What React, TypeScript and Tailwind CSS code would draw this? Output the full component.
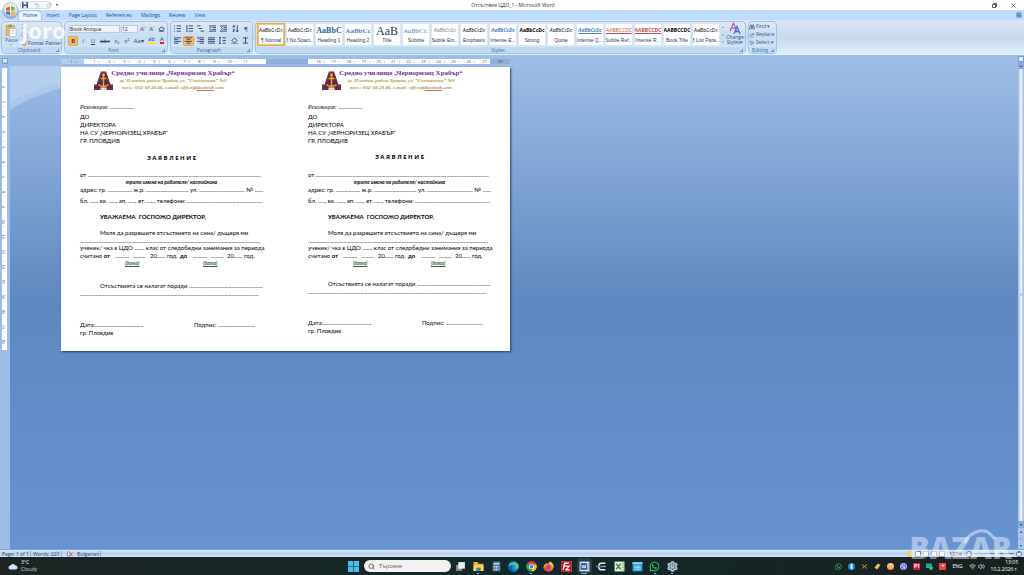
import type { ReactNode } from "react";
import { FaWhatsapp, FaViber, FaBluetoothB } from "react-icons/fa";
import { SiFilezilla } from "react-icons/si";
import {
  Binoculars,
  CircleHelp,
  Copy,
  MousePointer2,
  Paintbrush,
  Redo2,
  Scissors,
  Search,
  Settings,
  Undo2,
  Volume2,
  Wifi,
} from "lucide-react";

const tabs = ["Home", "Insert", "Page Layout", "References", "Mailings", "Review", "View"];

const styleItems = [
  { sample: "AaBbCcDc", label: "¶ Normal", look: "text-black text-[5px]" },
  { sample: "AaBbCcDc", label: "¶ No Spaci...", look: "text-black text-[5px]" },
  { sample: "AaBbC", label: "Heading 1", look: "text-[#2a6092] text-[8px] font-bold font-['Liberation_Serif',serif]" },
  { sample: "AaBbCc", label: "Heading 2", look: "text-[#4f81bd] text-[7px] font-bold font-['Liberation_Serif',serif]" },
  { sample: "AaB", label: "Title", look: "text-[#17365d] text-[12px] font-['Liberation_Serif',serif]" },
  { sample: "AaBbCc.", label: "Subtitle", look: "text-[#4f81bd] text-[7px] italic font-['Liberation_Serif',serif]" },
  { sample: "AaBbCcDc", label: "Subtle Em...", look: "text-[#808080] text-[5px] italic" },
  { sample: "AaBbCcDc", label: "Emphasis", look: "text-black text-[5px] italic" },
  { sample: "AaBbCcDc", label: "Intense E...", look: "text-[#4f81bd] text-[5px] italic font-bold" },
  { sample: "AaBbCcDc", label: "Strong", look: "text-black text-[5px] font-bold" },
  { sample: "AaBbCcDc", label: "Quote", look: "text-black text-[5px] italic" },
  { sample: "AaBbCcDc", label: "Intense Q...", look: "text-[#4f81bd] text-[5px] italic font-bold underline" },
  { sample: "AABBCCDC", label: "Subtle Ref...", look: "text-[#c0504d] text-[5px] underline" },
  { sample: "AABBCCDC", label: "Intense R...", look: "text-[#c0504d] text-[5px] font-bold underline" },
  { sample: "AABBCCDC", label: "Book Title", look: "text-black text-[5px] font-bold" },
  { sample: "AaBbCcDc", label: "¶ List Para...", look: "text-black text-[5px]" },
];

const dots = (n: number) => ".".repeat(n);
const range = (from: number, to: number) =>
  Array.from({ length: to - from + 1 }, (_, i) => from + i);

function Group({ title, className, children }: { title: string; className: string; children: ReactNode }) {
  return (
    <section
      aria-label={title}
      className={`flex flex-col overflow-hidden rounded-sm border border-[#a5c3e8] bg-gradient-to-b from-[#dce8f5] via-[#c9dcf0] to-[#d6e8fa] ${className}`}
    >
      <div className="flex min-h-0 flex-1">{children}</div>
      <div className="flex h-1.5 items-center justify-center bg-[#c1d9f1] text-[5px] leading-[6px] text-[#3e6aaa]">
        <span className="flex-1 text-center">{title}</span>
        <span className="mr-0.5 size-[3px] border-b border-r border-[#6d8fc0]" />
      </div>
    </section>
  );
}

function Tool({ label, active, children }: { label: string; active?: boolean; children: ReactNode }) {
  return (
    <button
      aria-label={label}
      className={`flex h-2 min-w-2 items-center justify-center whitespace-nowrap px-px text-[6px] leading-[8px] text-[#2b4677] ${
        active ? "rounded-[1px] bg-[#fbb95f] ring-1 ring-[#e0a457]" : ""
      }`}
    >
      {children}
    </button>
  );
}

function Lines({ d }: { d: string }) {
  return (
    <svg viewBox="0 0 8 8" className="size-[7px]" fill="none" stroke="#26406f" strokeWidth="1">
      <path d={d} />
    </svg>
  );
}

function OfficeButton() {
  return (
    <button aria-label="Office Button" className="absolute left-0.5 top-0.5 size-[17px]">
      <svg viewBox="0 0 34 34">
        <defs>
          <radialGradient id="orb" cx="0.5" cy="0.3" r="0.7">
            <stop offset="0" stopColor="#ffffff" />
            <stop offset="0.6" stopColor="#d5dce8" />
            <stop offset="1" stopColor="#8c9fbd" />
          </radialGradient>
        </defs>
        <circle cx="17" cy="17" r="16" fill="url(#orb)" stroke="#8da2c4" />
        <path d="M8 12l8-3v8H8z" fill="#e8592a" />
        <path d="M18 8l7 3v6h-7z" fill="#7fb342" />
        <path d="M8 19h8v7l-8-2z" fill="#3b7fc8" />
        <path d="M18 19h8v5l-8 3z" fill="#f6b72d" />
      </svg>
    </button>
  );
}

function TitleBar() {
  return (
    <header className="flex h-2.5 items-center bg-white pl-5 text-[#333]">
      <div className="flex h-2 w-8 items-center gap-1.5 rounded-r-full border border-[#d5dded] bg-[#f3f6fb] pl-px">
        <button aria-label="Save">
          <svg viewBox="0 0 12 12" className="size-1.5">
            <path d="M0 0h12v12H0z" fill="#3d4fa8" />
            <path d="M3 0h6v5H3zM3 8h6v4H3z" fill="#e8edf8" />
          </svg>
        </button>
        <button aria-label="Undo"><Undo2 className="size-1.5 text-[#8fa6cc]" /></button>
        <button aria-label="Redo"><Redo2 className="size-1.5 text-[#8fa6cc]" /></button>
      </div>
      <span className="ml-1 text-[4px] leading-[6px]">▾</span>
      <h1 className="flex-1 pr-6 text-center text-[5px] leading-[6px]">Отсъствие ЦДО_1 - Microsoft Word</h1>
      <div className="flex w-8 items-center justify-between pr-2">
        <button aria-label="Restore">
          <svg viewBox="0 0 10 10" className="size-[5px]" fill="none" stroke="#333" strokeWidth="1.6">
            <path d="M1 3h6v6H1zM3 3V1h6v6H7" />
          </svg>
        </button>
        <button aria-label="Close">
          <svg viewBox="0 0 10 10" className="size-[5px]" stroke="#333" strokeWidth="1.4">
            <path d="M1 1l8 8M9 1L1 9" />
          </svg>
        </button>
      </div>
    </header>
  );
}

function Tabs() {
  return (
    <nav className="flex h-2.5 items-end gap-px bg-[#bfdbff] pl-[19px] pr-0.5">
      {tabs.map((tab) => (
        <button
          key={tab}
          className={`h-[9px] whitespace-nowrap px-1 text-[5px] leading-[9px] text-[#234a8e] ${
            tab === "Home" ? "rounded-t-sm bg-[#eaf3ff] ring-1 ring-[#a2c2ee]" : ""
          }`}
        >
          {tab}
        </button>
      ))}
      <button aria-label="Help" className="mb-0.5 ml-auto">
        <CircleHelp className="size-1.5 rounded-full bg-[#3d74c6] text-white" />
      </button>
    </nav>
  );
}

function Ribbon() {
  return (
    <div className="relative flex h-9 gap-0.5 border-b border-[#9cbfe8] bg-gradient-to-b from-[#dbe6f3] via-[#c7daed] to-[#dff1fd] px-px py-px">
      <Group title="Clipboard" className="w-[61px]">
        <button className="flex w-5 flex-col items-center pt-0.5 text-[5px] leading-[6px] text-[#3e5f96]">
          <svg viewBox="0 0 24 26" className="h-[13px] w-3">
            <path d="M2 3h17v20H2z" fill="#e9b650" stroke="#b88a35" />
            <path d="M7 1h7v5H7z" fill="#8a8fa0" />
            <path d="M9 9h13v16H9z" fill="#fff" stroke="#8aa0c6" />
            <path d="M11 13h8M11 16h8M11 19h8" stroke="#9cb2d6" />
          </svg>
          Paste
          <span className="text-[3px] leading-[4px]">▾</span>
        </button>
        <div className="flex flex-col items-start justify-between pt-px text-[5px] leading-[7px] text-[#33528c]">
          <button aria-label="Cut"><Scissors className="size-[7px] text-[#8fa5c8]" /></button>
          <button aria-label="Copy"><Copy className="size-[7px] text-[#8fa5c8]" /></button>
          <button className="flex items-center whitespace-nowrap font-['Liberation_Sans',sans-serif]">
            <Paintbrush className="size-[7px] text-[#c29335]" />
            Format Painter
          </button>
        </div>
      </Group>

      <Group title="Font" className="w-[104px]">
        <div className="flex flex-1 flex-col justify-center gap-1 px-1">
          <div className="flex items-center gap-px">
            <select aria-label="Font name" className="h-2 w-[51px] appearance-none border border-[#b7cbe8] bg-[#eef5fd] text-[5px] leading-[6px] text-[#222]">
              <option>Book Antiqua</option>
            </select>
            <select aria-label="Font size" className="h-2 w-[17px] appearance-none border border-[#b7cbe8] bg-[#eef5fd] text-[5px] leading-[6px] text-[#222]">
              <option>12</option>
            </select>
            <Tool label="Grow Font">A˄</Tool>
            <Tool label="Shrink Font">A˅</Tool>
            <Tool label="Clear Formatting"><Lines d="M1 5l3-3 3 2-3 3zM1 7h6" /></Tool>
          </div>
          <div className="flex items-center justify-between">
            <Tool label="Bold" active><b>B</b></Tool>
            <Tool label="Italic"><i>I</i></Tool>
            <Tool label="Underline"><u>U</u></Tool>
            <Tool label="Strikethrough"><s>abc</s></Tool>
            <Tool label="Subscript">x₂</Tool>
            <Tool label="Superscript">x²</Tool>
            <Tool label="Change Case">Aa▾</Tool>
            <Tool label="Highlight">
              <span className="border-b-2 border-[#ffee00] leading-[5px]">ab</span>
            </Tool>
            <Tool label="Font Color">
              <span className="border-b-2 border-[#e02020] leading-[5px]">A</span>
            </Tool>
          </div>
        </div>
      </Group>

      <Group title="Paragraph" className="w-[83px]">
        <div className="flex flex-1 flex-col justify-center gap-1 px-0.5">
          <div className="flex items-center justify-between">
            <Tool label="Bullets"><Lines d="M0 1h1M3 1h5M0 4h1M3 4h5M0 7h1M3 7h5" /></Tool>
            <Tool label="Numbering"><Lines d="M1 0v8M3 1h5M3 4h5M3 7h5" /></Tool>
            <Tool label="Multilevel List"><Lines d="M0 1h4M2 4h4M4 7h4" /></Tool>
            <Tool label="Decrease Indent"><Lines d="M0 1h8M4 3h4M4 5h4M0 7h8M3 2L1 4l2 2" /></Tool>
            <Tool label="Increase Indent"><Lines d="M0 1h8M4 3h4M4 5h4M0 7h8M1 2l2 2-2 2" /></Tool>
            <Tool label="Sort"><Lines d="M1 3l1-3 1 3M1 5h2L1 8h2M6 0v8M5 6l1 2 1-2" /></Tool>
            <Tool label="Show Marks">¶</Tool>
          </div>
          <div className="flex items-center justify-between">
            <Tool label="Align Left"><Lines d="M0 1h8M0 3h5M0 5h8M0 7h5" /></Tool>
            <Tool label="Center" active><Lines d="M0 1h8M2 3h4M0 5h8M2 7h4" /></Tool>
            <Tool label="Align Right"><Lines d="M0 1h8M3 3h5M0 5h8M3 7h5" /></Tool>
            <Tool label="Justify"><Lines d="M0 1h8M0 3h8M0 5h8M0 7h8" /></Tool>
            <Tool label="Line Spacing"><Lines d="M1 0v8M0 1l1-1 1 1M0 7l1 1 1-1M4 1h4M4 4h4M4 7h4" /></Tool>
            <Tool label="Shading"><Lines d="M1 4l3-3 3 3-3 3zM0 8h8" /></Tool>
            <Tool label="Borders"><Lines d="M1 1h6M4 1v6M1 7h6" /></Tool>
          </div>
        </div>
      </Group>

      <Group title="Styles" className="w-[491px]">
        <div className="flex pt-px pl-px">
          {styleItems.map((item, i) => (
            <button
              key={item.label}
              className={`mr-px flex h-[23px] w-7 flex-col items-center justify-between overflow-hidden whitespace-nowrap border bg-white pb-px pt-px text-[#2a3a6b] ${
                i === 0 ? "border-[#eaa944] ring-1 ring-inset ring-[#f3c67a]" : "border-[#dbe7f5]"
              }`}
            >
              <span className={`flex h-3 items-center ${item.look}`}>{item.sample}</span>
              <span className="font-['Liberation_Sans',sans-serif] text-[5px] leading-[7px]">{item.label}</span>
            </button>
          ))}
        </div>
        <div className="flex w-1 flex-col justify-evenly text-[3px] leading-[4px] text-[#4a6699]">
          <button aria-label="Scroll up">▴</button>
          <button aria-label="Scroll down">▾</button>
          <button aria-label="More styles">▾</button>
        </div>
        <button className="flex w-5 flex-col items-center text-[5px] leading-[5px] text-[#33528c]">
          <svg viewBox="0 0 24 26" className="h-[13px] w-3" fill="none" strokeWidth="2.5">
            <path d="M2 18L9 2l6 16M5 12h8" stroke="#b45bc0" />
            <path d="M10 24l6-15 6 15M12 19h8" stroke="#3e74c8" />
          </svg>
          <span>Change</span>
          <span>Styles▾</span>
        </button>
      </Group>

      <Group title="Editing" className="w-[29px]">
        <div className="flex flex-col justify-evenly text-[5px] leading-[7px] text-[#33528c]">
          <button className="flex items-center gap-px"><Binoculars className="size-1.5" />Find ▾</button>
          <button className="flex items-center gap-px"><Redo2 className="size-1.5" />Replace</button>
          <button className="flex items-center gap-px"><MousePointer2 className="size-1.5" />Select ▾</button>
        </div>
      </Group>

      <span className="pointer-events-none absolute left-[21px] top-0 text-[22px] font-bold leading-[20px] text-white/80">
        Joro
      </span>
    </div>
  );
}

function RulerScale({ from, to }: { from: number; to: number }) {
  return (
    <div className="flex h-[5px] w-[182px] overflow-hidden bg-white pl-1">
      {range(from, to).map((n) => (
        <span key={n} className="w-[15px] shrink-0 whitespace-nowrap text-center text-[4px] leading-[5px]">
          · {n} ·{n < to && " ı"}
        </span>
      ))}
    </div>
  );
}

function HorizontalRuler() {
  return (
    <div className="flex h-2.5 items-center text-[#3a4a68]">
      <div className="w-[61px] pl-0.5">
        <button aria-label="Tab selector" className="block size-1.5 border border-[#7c9ac6] bg-[#e3edfa] text-[5px] leading-[4px]">
          ∟
        </button>
      </div>
      <span className="h-[5px] w-[23px] bg-[#b5cdef] text-center text-[4px] leading-[5px]">· 1 · ı</span>
      <RulerScale from={1} to={11} />
      <span className="h-[5px] w-[42px] bg-[#8fafd9]" />
      <RulerScale from={16} to={27} />
      <span className="h-[5px] w-5 bg-[#8fafd9] text-center text-[4px] leading-[5px]">· 28 ·</span>
    </div>
  );
}

function VerticalRuler() {
  return (
    <div className="w-2.5 bg-[#9dbde6] pl-0.5 pt-0.5">
      <div className="flex w-[5px] flex-col items-center bg-white py-1.5 text-[#3a4a68]">
        {range(1, 18).map((n) => (
          <span key={n} className="flex h-[15px] flex-col items-center justify-between text-[4px] leading-[4px]">
            <span>-</span>
            <span>·</span>
            <span className="-rotate-90">{n}</span>
          </span>
        ))}
      </div>
    </div>
  );
}

function SchoolCrest() {
  return (
    <svg viewBox="0 0 38 40" className="mt-0.5 h-5 w-[19px] shrink-0">
      <path d="M14 1h10l9 26h5v11H25v-5H13v5H0V27h5z" fill="#5b2547" />
      <path d="M15 3h8l9 26h4v7H2v-7h4z" fill="none" stroke="#a04a4c" strokeWidth="1.500" strokeDasharray="3 2" />
      <path d="M19 5v27M13 15h12M9 27c4 5 16 5 20 0" fill="none" stroke="#e8a531" strokeWidth="3" />
      <circle cx="19" cy="8" r="3" fill="#e8a531" />
    </svg>
  );
}

interface ApplicationProps {
  titleGap: string;
  reasonGap: string;
  signGap: string;
}

function Application({ titleGap, reasonGap, signGap }: ApplicationProps) {
  return (
    <article className="w-[183px] whitespace-nowrap pt-0.5 font-['Lato','Liberation_Sans',sans-serif] text-[6px] leading-[8px] text-black">
      <div className="flex pl-3.5">
        <SchoolCrest />
        <div className="-ml-1 w-32 text-center font-['Liberation_Serif',serif]">
          <h2 className="text-[7px] font-bold text-[#7030a0]">Средно училище „Черноризец Храбър“</h2>
          <p className="text-[5px] font-bold italic leading-[7px] text-[#b5943c]">гр. Пловдив, район Тракия, ул. “Съединение” №9</p>
          <p className="text-[5px] font-bold italic leading-[7px] text-[#b5943c]">
            тел.: 032/ 68 28 48, e-mail: office@<span className="underline decoration-[#d66]">duohrab</span>.com
          </p>
        </div>
      </div>
      <p className="mt-3 font-['Liberation_Serif',serif] italic">Резолюция: {dots(16)}</p>
      <div className="mt-0.5">
        <p>ДО</p>
        <p>ДИРЕКТОРА</p>
        <p>НА СУ „ЧЕРНОРИЗЕЦ ХРАБЪР“</p>
        <p>ГР. ПЛОВДИВ</p>
      </div>
      <h3 className={`text-center font-['Open_Sans',sans-serif] font-bold ${titleGap}`}>З А Я В Л Е Н И Е</h3>
      <p>от {dots(122)}</p>
      <p className="text-center text-[5px] font-bold italic leading-[7px]">трите имена на родителя/ настойника</p>
      <p className="leading-[7px]">адрес: гр. {dots(17)} ж.р. {dots(30)} ул. {dots(32)} № ......</p>
      <p className="mt-1">бл. ....., вх. ....., ап. ....., ет. ....., телефони: {dots(53)}</p>
      <p className="mt-2 pl-5 font-bold">УВАЖАЕМА&nbsp; ГОСПОЖО ДИРЕКТОР,</p>
      <p className="mt-2 pl-5">Моля да разрешите отсъствието на сина/ дъщеря ми</p>
      <p className="leading-[7px]">{dots(126)},</p>
      <p>ученик/ чка в ЦДО ....... клас от следобедни занимания за периода</p>
      <p className="flex">
        <span className="w-[35px]">считано <b>от</b></span>
        <span className="w-[18px]">..........</span>
        <span className="w-[17px]">.........</span>
        <span className="w-[30px]">20...... год.</span>
        <b className="w-[13px]">до</b>
        <span className="w-[18px]">..........</span>
        <span className="w-4">.........</span>
        <span>20...... год.</span>
      </p>
      <p className="flex text-[5px] font-bold italic leading-[7px] text-[#3d5c3d]">
        <span className="w-[78px] pl-[45px] underline">(дата)</span>
        <span className="pl-[45px] underline">(дата)</span>
      </p>
      <p className={`pl-5 ${reasonGap}`}>Отсъствията се налагат поради {dots(52)}</p>
      <p>{dots(126)}</p>
      <div className={`flex ${signGap}`}>
        <span className="w-[114px]">Дата:{dots(34)}</span>
        <span>Подпис: {dots(26)}</span>
      </div>
      <p>гр. Пловдив</p>
    </article>
  );
}

function ScrollBar() {
  return (
    <div className="flex w-1.5 flex-col items-center bg-[#a9c4e8] text-[4px] leading-[7px] text-[#29406c]">
      <button aria-label="View ruler" className="size-1.5 border border-[#7c9ac6] bg-[#e3edfa]" />
      <button aria-label="Scroll up" className="h-[7px] w-full bg-[#8aa9d6]">▴</button>
      <div className="flex w-1 flex-1 flex-col justify-center border-x border-[#c3d3ea] bg-[#e6eef9] text-center">
        <span className="leading-[4px]">≡</span>
      </div>
      <button aria-label="Scroll down" className="h-[7px] w-full bg-[#8aa9d6]">▾</button>
      <button aria-label="Previous page">▴</button>
      <button aria-label="Browse object">○</button>
      <button aria-label="Next page">▾</button>
    </div>
  );
}

function StatusBar() {
  return (
    <footer className="flex h-2 items-center border-t border-[#7fa3d6] bg-gradient-to-b from-[#dbe9fb] via-[#b5d0f3] to-[#d6e6fa] text-[5px] leading-[6px] text-[#26406f]">
      <span className="w-[31px] whitespace-nowrap border-r border-[#8fb0de] pl-0.5">Page: 1 of 1</span>
      <span className="w-[31px] whitespace-nowrap border-r border-[#8fb0de] pl-0.5">Words: 220</span>
      <span className="flex w-[15px] justify-center">
        <svg viewBox="0 0 12 12" className="size-1.5" fill="none" strokeWidth="2">
          <path d="M1 2h5v8H1z" stroke="#7b8fb5" fill="#fff" />
          <path d="M5 4l6 6M11 3L5 10" stroke="#e05a2e" />
        </svg>
      </span>
      <span className="w-6 border-r border-[#8fb0de]">Bulgarian</span>
      <div className="ml-auto flex items-center gap-0.5 pr-0.5">
        <button aria-label="Print Layout" className="size-1.5 bg-[#fbc877]" />
        <button aria-label="Full Screen Reading" className="size-1.5 border border-[#6681ae] bg-white" />
        <button aria-label="Web Layout" className="size-1.5 border border-[#8fa9d3] bg-white" />
        <button aria-label="Outline" className="size-1.5 border border-[#8fa9d3] bg-white" />
        <button aria-label="Draft" className="size-1.5 border border-[#8fa9d3] bg-white" />
        <span className="px-0.5">127%</span>
        <button aria-label="Zoom out" className="size-1.5 rounded-full border border-[#5c78a8] bg-white leading-[3px]">-</button>
        <input
          aria-label="Zoom"
          type="range"
          defaultValue={56}
          className="h-px w-10 appearance-none bg-[#6681ae] [&::-webkit-slider-thumb]:h-[5px] [&::-webkit-slider-thumb]:w-[3px] [&::-webkit-slider-thumb]:appearance-none [&::-webkit-slider-thumb]:bg-[#e9f1fc]"
        />
        <button aria-label="Zoom in" className="size-1.5 rounded-full border border-[#5c78a8] bg-white leading-[3px]">+</button>
      </div>
    </footer>
  );
}

function AppButton({ label, running, active, children }: { label: string; running?: boolean; active?: boolean; children: ReactNode }) {
  return (
    <button
      aria-label={label}
      className={`flex h-4 w-[15px] flex-col items-center justify-end gap-px rounded-sm ${active ? "bg-white/10" : ""}`}
    >
      {children}
      <span className={`h-px ${active ? "w-1.5 bg-[#5cc4f2]" : running ? "w-0.5 bg-[#a9b3b5]" : "w-0.5"}`} />
    </button>
  );
}

function TaskBar() {
  return (
    <div className="flex h-[18px] items-center bg-gradient-to-r from-[#1d2423] via-[#12292b] to-[#18211f] text-white">
      <div className="flex flex-1 items-center gap-[3px] pl-2 text-[5px] leading-[7px]">
        <svg viewBox="0 0 20 14" className="h-[7px] w-2.5">
          <path d="M5 13a4 4 0 010-8 5.500 5.500 0 0110 0 4 4 0 010 8z" fill="#cfe3fb" />
        </svg>
        <div>
          <p>3°C</p>
          <p className="text-[#d0d6d6]">Cloudy</p>
        </div>
      </div>

      <div className="flex w-[334px] items-center justify-between">
        <AppButton label="Start">
          <svg viewBox="0 0 20 20" className="size-[11px]">
            <path d="M0 0h9.500v9.500H0zM10.500 0H20v9.500h-9.500zM0 10.500h9.500V20H0zM10.500 10.500H20V20h-9.500z" fill="#47bdf0" />
          </svg>
        </AppButton>
        <label className="flex h-3 w-[87px] items-center gap-1 rounded-full bg-[#f1f3f3] px-1">
          <Search className="size-[7px] text-[#222]" />
          <input
            aria-label="Search"
            placeholder="Търсене"
            className="w-14 bg-transparent font-['Liberation_Sans',sans-serif] text-[6px] leading-[8px] outline-none placeholder:text-[#666]"
          />
        </label>
        <AppButton label="Task View">
          <svg viewBox="0 0 20 20" className="size-[11px]">
            <path d="M2 7h11v11H2z" fill="#8b9193" />
            <path d="M6 2h12v12H6z" fill="#eceeee" />
          </svg>
        </AppButton>
        <AppButton label="File Explorer" running>
          <svg viewBox="0 0 20 20" className="size-[11px]">
            <path d="M1 2h7l2 3h9v13H1z" fill="#f3b62f" />
            <path d="M1 8h18v10H1z" fill="#ffd65c" />
            <path d="M6 12h8v6H6z" fill="#2a82d2" />
          </svg>
        </AppButton>
        <AppButton label="Calculator">
          <svg viewBox="0 0 20 20" className="size-[11px]">
            <path d="M3 1h14v18H3z" fill="#566a77" />
            <path d="M5 3h10v4H5z" fill="#8fd3f7" />
            <path d="M5 9h3v3H5zM9 9h3v3H9zM5 14h3v3H5zM9 14h3v3H9z" fill="#dfe6ea" />
            <path d="M13 9h3v8h-3z" fill="#41a5e4" />
          </svg>
        </AppButton>
        <AppButton label="Edge">
          <svg viewBox="0 0 20 20" className="size-[11px]">
            <circle cx="10" cy="10" r="9.500" fill="#1d87d2" />
            <path d="M1 9a9.500 9.500 0 0118.500 1c0 4-5 5-7 3 2-3-1-6-4-6-3 0-6 1-7.500 2z" fill="#46cf8a" />
            <path d="M8 9c-3 4 0 9 6 9-7 3-12-1-12-6 1-3 4-4 6-3z" fill="#125ba6" />
          </svg>
        </AppButton>
        <AppButton label="Chrome" running>
          <svg viewBox="0 0 20 20" className="size-[11px]">
            <path d="M10 10L1.800 5A9.500 9.500 0 0118.200 5z" fill="#e84335" />
            <path d="M10 10L18.200 5A9.500 9.500 0 0110 19.500z" fill="#fbc116" />
            <path d="M10 10v9.500A9.500 9.500 0 011.800 5z" fill="#33a852" />
            <circle cx="10" cy="10" r="4.600" fill="#fff" />
            <circle cx="10" cy="10" r="3.500" fill="#4285f4" />
          </svg>
        </AppButton>
        <AppButton label="Firefox">
          <svg viewBox="0 0 20 20" className="size-[11px]">
            <path d="M3 5l2 1 1-3 3 2 3-4c5 2 8 6 7 11-1 5-5 7-9 7S1 16 1 11c0-2 1-4 2-6z" fill="#ff8a2b" />
            <path d="M12 1c5 2 8 6 7 11-1-3-3-5-6-6z" fill="#ffd23c" />
            <circle cx="10" cy="11" r="4" fill="#8a4bd0" />
            <path d="M1 11c0 5 5 8 9 8s7-2 8-5c-4 3-10 3-12-2-2 0-4-1-5-1z" fill="#f0443e" />
          </svg>
        </AppButton>
        <AppButton label="FileZilla"><SiFilezilla className="size-[11px] bg-white text-[#c01818]" /></AppButton>
        <AppButton label="Word" active>
          <svg viewBox="0 0 20 20" className="size-[11px]">
            <path d="M1 1h18v18H1z" fill="#cfdcf3" />
            <path d="M3 4h12v12H3z" fill="#2b57a4" />
            <path d="M5 7l2 6 2-5 2 5 2-6" fill="none" stroke="#fff" strokeWidth="1.500" />
            <path d="M16 5h2M16 9h2M16 13h2" stroke="#2b57a4" />
          </svg>
        </AppButton>
        <AppButton label="Editor">
          <svg viewBox="0 0 20 20" className="size-[11px]" fill="none" strokeWidth="2.500">
            <path d="M17 4H9c-3 0-4 2-4 6s1 6 4 6h8" stroke="#e9ecec" />
            <path d="M0 10h9" stroke="#b15bd8" />
            <path d="M9 10h9" stroke="#4fb6e8" />
          </svg>
        </AppButton>
        <AppButton label="Excel">
          <svg viewBox="0 0 20 20" className="size-[11px]">
            <path d="M1 1h18v18H1z" fill="#e0efd7" />
            <path d="M4 5l8 10M12 5L4 15" stroke="#3b8a3c" strokeWidth="2.500" />
            <path d="M14 4h4M14 8h4M14 12h4M14 16h4" stroke="#6cae5b" strokeWidth="1.500" />
          </svg>
        </AppButton>
        <AppButton label="Calendar">
          <svg viewBox="0 0 20 20" className="size-[11px]">
            <path d="M1 2h18v17H1z" fill="#1f9bdd" />
            <path d="M1 2h18v4H1z" fill="#7cd0f5" />
            <path d="M5 9h10v7H5zM5 12h10M9 9v7M12 9v7" fill="none" stroke="#d9f2ff" />
          </svg>
        </AppButton>
        <AppButton label="WhatsApp" running><FaWhatsapp className="size-[11px] text-[#35d366]" /></AppButton>
        <AppButton label="Settings" running><Settings strokeWidth={4} className="size-[11px] text-[#a9c4dc]" /></AppButton>
      </div>

      <div className="flex flex-1 items-center justify-end gap-1.5 pr-1.5">
        <FaWhatsapp className="size-[7px] text-[#35d366]" />
        <FaBluetoothB className="size-[7px] rounded-full bg-[#1787dc]" />
        <svg viewBox="0 0 14 14" className="size-[7px]" stroke="#c3a32a" strokeWidth="2">
          <path d="M2 3l10 8M12 3L2 11" />
        </svg>
        <svg viewBox="0 0 14 14" className="size-[7px]">
          <path d="M1 9l7-8 5 3-7 9z" fill="#f0c35a" />
        </svg>
        <span className="size-[7px] rounded-full bg-gradient-to-b from-[#ffd9a0] to-[#f28a30]" />
        <FaViber className="size-[7px] rounded-full bg-[#7360f2] text-white" />
        <span className="size-[7px] bg-[#d8163c] text-center text-[5px] font-bold leading-[7px]">P1</span>
        <svg viewBox="0 0 14 14" className="size-[7px]">
          <path d="M0 1h12v9H0z" fill="#1ca2a8" />
          <circle cx="10" cy="10" r="4" fill="#3fbd5d" />
        </svg>
        <span className="size-[7px] bg-[#e8483c] text-center text-[6px] font-bold leading-[7px]">+</span>
        <span className="text-[5px] leading-[7px]">ENG</span>
        <Wifi className="size-[7px]" />
        <Volume2 className="-ml-1 size-[7px]" />
        <div className="text-right text-[5px] leading-[7px]">
          <p>13:05</p>
          <p>10.2.2026 г.</p>
        </div>
      </div>
    </div>
  );
}

function Watermark() {
  return (
    <div className="pointer-events-none absolute bottom-2 right-3 text-white/45">
      <svg viewBox="0 0 40 16" className="absolute -top-px right-3 h-4 w-10" fill="none" stroke="currentColor" strokeWidth="3">
        <path d="M4 15C10 4 22 0 29 5l6 6" />
      </svg>
      <span className="font-['Open_Sans',sans-serif] text-[30px] font-black leading-[38px]">BAZAR</span>
    </div>
  );
}

export default function App() {
  return (
    <div className="relative flex min-h-screen flex-col overflow-hidden bg-[#6691cf] font-['Open_Sans','Noto_Sans',sans-serif]">
      <TitleBar />
      <Tabs />
      <Ribbon />
      <OfficeButton />
      <main className="flex flex-1 bg-gradient-to-b from-[#9fbee7] via-[#5f88c0] to-[#6793d2]">
        <div className="flex flex-1 flex-col">
          <HorizontalRuler />
          <div className="relative flex flex-1">
            <VerticalRuler />
            <svg viewBox="0 0 300 50" className="absolute left-2.5 top-0 h-[50px] w-[300px]">
              <path d="M0 0h150C90 10 30 24 0 44z" fill="#c5daf3" opacity="0.5" />
              <path d="M0 0h120C70 10 25 22 0 36z" fill="#c5daf3" opacity="0.35" />
            </svg>
            <div className="relative ml-[51px] mt-px flex gap-[45px] self-start bg-white pb-3.5 pl-[19px] pr-[19px] shadow-[1px_1px_2px_#26406f]">
              <Application titleGap="my-[9px]" reasonGap="mt-[15px]" signGap="mt-[23px]" />
              <Application titleGap="mb-2.5 mt-2" reasonGap="mt-[13px]" signGap="mt-[23px]" />
            </div>
          </div>
        </div>
        <ScrollBar />
      </main>
      <StatusBar />
      <TaskBar />
      <Watermark />
    </div>
  );
}
